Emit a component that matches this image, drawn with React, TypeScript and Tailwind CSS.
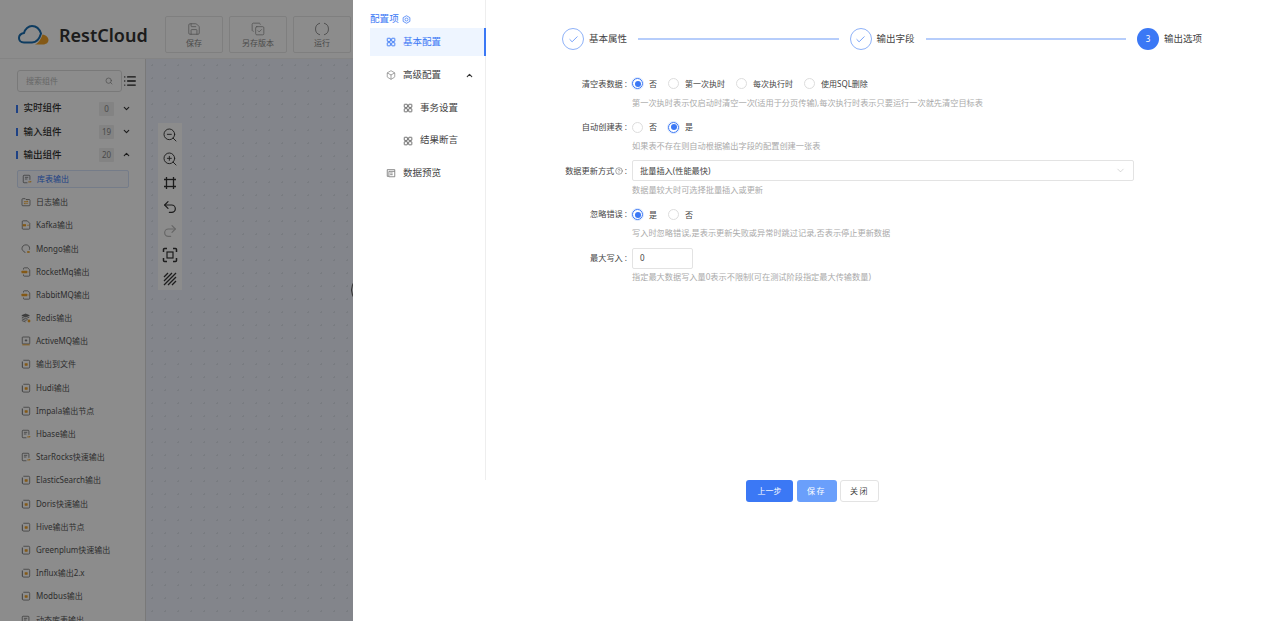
import React from 'react';
import { Save, CopyCheck, ZoomOut, ZoomIn, Undo2, Redo2, Search, ChevronDown, ChevronUp, Check, List, Box, CircleHelp } from 'lucide-react';

type IconKind = 'doc' | 'log' | 'kafka' | 'mongo' | 'mq' | 'redis' | 'active' | 'file';

const items: { label: string; icon: IconKind }[] = [
  { label: '日志输出', icon: 'log' },
  { label: 'Kafka输出', icon: 'kafka' },
  { label: 'Mongo输出', icon: 'mongo' },
  { label: 'RocketMq输出', icon: 'mq' },
  { label: 'RabbitMQ输出', icon: 'mq' },
  { label: 'Redis输出', icon: 'redis' },
  { label: 'ActiveMQ输出', icon: 'active' },
  { label: '输出到文件', icon: 'file' },
  { label: 'Hudi输出', icon: 'file' },
  { label: 'Impala输出节点', icon: 'file' },
  { label: 'Hbase输出', icon: 'doc' },
  { label: 'StarRocks快速输出', icon: 'doc' },
  { label: 'ElasticSearch输出', icon: 'file' },
  { label: 'Doris快速输出', icon: 'file' },
  { label: 'Hive输出节点', icon: 'file' },
  { label: 'Greenplum快速输出', icon: 'file' },
  { label: 'Influx输出2.x', icon: 'file' },
  { label: 'Modbus输出', icon: 'file' },
  { label: '动态库表输出', icon: 'doc' },
];

function NodeIcon({ kind }: { kind: IconKind }) {
  const stroke = '#555';
  const accent = '#f0a328';
  return (
    <svg viewBox="0 0 12 12" className="w-[10px] h-[10px] shrink-0" fill="none" stroke={stroke} strokeWidth="0.8">
      {kind === 'doc' && (
        <>
          <path d="M6.5 10.5H2.500a1 1 0 0 1-1-1v-7a1 1 0 0 1 1-1h6a1 1 0 0 1 1 1V7" />
          <path d="M3.500 4h4M3.500 6h3" />
          <path d="M7.500 9.500h3.500M9.800 8.300l1.200 1.200" stroke={accent} strokeWidth="1.100" />
        </>
      )}
      {kind === 'log' && (
        <>
          <path d="M1.200 3a1 1 0 0 1 1-1H5l1 1h3.800a1 1 0 0 1 1 1v5.500a1 1 0 0 1-1 1H2.200a1 1 0 0 1-1-1z" />
          <path d="M3.500 5.500h5M3.500 7.500h5M7 4.500l1.500 1M5 8.500L3.500 7.500" stroke={accent} strokeWidth="0.900" />
        </>
      )}
      {kind === 'kafka' && (
        <>
          <path d="M2.500 1h5l3 3v6a1 1 0 0 1-1 1h-7a1 1 0 0 1-1-1V2a1 1 0 0 1 1-1z" />
          <rect x="2" y="5" width="4" height="2.600" fill={accent} stroke="none" />
          <path d="M7 6.300h3" stroke={accent} />
        </>
      )}
      {kind === 'mongo' && (
        <>
          <path d="M6 1C3 1 1.200 3 1.200 5.400c0 2 1.300 3.200 2.800 3.700l1 1.600" />
          <path d="M6 1c2.600 0 4.300 1.800 4.300 4.200 0 .7-.1 1.300-.4 1.800" />
          <rect x="7.400" y="8.600" width="3" height="2" fill={accent} stroke="none" />
        </>
      )}
      {kind === 'mq' && (
        <>
          <path d="M3 3V2a1 1 0 0 1 1-1h4l2.500 2.500V10a1 1 0 0 1-1 1H4a1 1 0 0 1-1-1V9" />
          <rect x="0.600" y="4.400" width="7" height="3.200" rx="0.600" fill={accent} stroke="none" />
          <path d="M8.800 6h1.700" stroke={accent} />
        </>
      )}
      {kind === 'redis' && (
        <>
          <path d="M5.500 1.200L10 3 5.500 4.800 1 3z" fill="#777" />
          <path d="M1 5l4.500 1.800L10 5M1 7l4.500 1.800L8 7.800M1 9l4.500 1.800" />
          <circle cx="9.600" cy="9.600" r="1.700" fill={accent} stroke="none" />
        </>
      )}
      {kind === 'active' && (
        <>
          <rect x="1.500" y="1.200" width="9" height="8.300" rx="0.800" />
          <path d="M4.500 5.300h3M6 3.800v3" />
          <path d="M1.500 10.600h9" stroke={accent} strokeWidth="1.100" />
        </>
      )}
      {kind === 'file' && (
        <>
          <path d="M2.800 1.500H9a1.400 1.400 0 0 1 1.400 1.400v6.600A1.400 1.400 0 0 1 9 10.900H3.200a1.400 1.400 0 0 1-1.400-1.400" />
          <path d="M1.600 3v7" strokeWidth="1" />
          <rect x="4.400" y="5" width="3.600" height="3" rx="0.500" fill={accent} stroke="none" />
        </>
      )}
    </svg>
  );
}

function ToolButton({ label, children }: { label: string; children: React.ReactNode }) {
  return (
    <div className="w-[58px] h-[37px] border border-[#e8e8e8] rounded-[2px] flex flex-col items-center pt-[5px] text-[8px] leading-[11px] text-[#888] shrink-0">
      {children}
      <span className="mt-[1px]">{label}</span>
    </div>
  );
}

function Section({ title, count, open }: { title: string; count: number; open?: boolean }) {
  return (
    <div className="h-[23.2px] flex items-center pl-[16px] pr-[14.5px]">
      <span className="w-[1.5px] h-[8px] bg-[#3a78f2] mr-[6px]" />
      <span className="text-[9.5px] font-medium text-[#333] flex-1">{title}</span>
      <span className="w-[15px] h-[14px] bg-[#eee] rounded-[1px] text-[8px] text-[#888] flex items-center justify-center mr-[7.5px]">{count}</span>
      {open ? <ChevronUp className="w-[9px] h-[9px] text-[#333]" strokeWidth={3} /> : <ChevronDown className="w-[9px] h-[9px] text-[#333]" strokeWidth={3} />}
    </div>
  );
}

function Radio({ label, checked }: { label: string; checked?: boolean }) {
  return (
    <label className="flex items-center mr-[11px]">
      <span className={`w-[11px] h-[11px] rounded-full border flex items-center justify-center mr-[6px] ${checked ? 'border-[#3b78f5] shadow-[0_0_0_1px_#dbe7fd]' : 'border-[#ddd]'}`}>
        {checked && <span className="w-[6px] h-[6px] rounded-full bg-[#3b78f5]" />}
      </span>
      <span className="text-[8px] text-[#444]">{label}</span>
    </label>
  );
}

function FormItem({ label, help, children }: { label: React.ReactNode; help: string; children: React.ReactNode }) {
  return (
    <div className="h-[43.6px] flex">
      <div className="w-[92px] h-[21px] flex items-center justify-end pr-[5px] text-[8.2px] text-[#444] shrink-0">
        {label}
        <span className="ml-[2px]">:</span>
      </div>
      <div className="flex-1">
        <div className="h-[21px] flex items-center">{children}</div>
        <div className="mt-[1.5px] h-[14px] flex items-center text-[8.2px] text-[#aaa]">{help}</div>
      </div>
    </div>
  );
}

function Step({ label, done, num, last }: { label: string; done?: boolean; num?: number; last?: boolean }) {
  return (
    <div className={`flex items-center ${last ? '' : 'flex-1'}`}>
      {done ? (
        <span className="w-[22px] h-[22px] rounded-full border border-[#8fb2f8] flex items-center justify-center shrink-0">
          <Check className="w-[11px] h-[11px] text-[#3b78f5]" strokeWidth={1.5} />
        </span>
      ) : (
        <span className="w-[22px] h-[22px] rounded-full bg-[#3b78f5] text-white text-[8px] flex items-center justify-center shrink-0">{num}</span>
      )}
      <span className="ml-[5px] pt-[1px] text-[9.5px] text-[#444] shrink-0">{label}</span>
      {!last && <span className="flex-1 h-[2px] bg-[#b6cdfb] mx-[11px]" />}
    </div>
  );
}

function GridIcon({ className }: { className: string }) {
  return (
    <svg viewBox="0 0 12 12" className={className} fill="none" stroke="currentColor" strokeWidth="1.1">
      <rect x="1.500" y="1.500" width="3.800" height="3.800" rx="0.500" />
      <rect x="6.800" y="1.500" width="3.800" height="3.800" rx="0.500" />
      <rect x="1.500" y="6.800" width="3.800" height="3.800" rx="0.500" />
      <rect x="6.800" y="6.800" width="3.800" height="3.800" rx="0.500" />
    </svg>
  );
}

export default function App() {
  return (
    <div className="relative w-full h-screen overflow-hidden bg-white font-['Noto_Sans','Noto_Sans_CJK_SC',sans-serif]">
      {/* app behind the drawer */}
      <div className="h-full flex flex-col">
        <div className="h-[59px] shrink-0 flex items-start pt-[16px] pl-[18px] gap-[6px] shadow-[inset_0_-1px_0_#f0f0f0]">
          <div className="flex items-center w-[141px] h-[37px] shrink-0">
            <svg viewBox="0 0 31 20" className="w-[31px] h-[20px] shrink-0">
              <path d="M17 19.500C21 18 23.500 13 24.500 9.500C28 10 30.500 12.500 30.500 15C30.500 18 27.500 19.500 25 19.500Z" fill="#f0a328" />
              <path d="M6 17.500C2.500 17.500 1 15 1 13C1 10 3.500 8.500 6 8C7 4 10.500 1 14 1C18 1 21.500 4 23 8.500C22 12 20 17.500 14 17.500Z" fill="none" stroke="#1a6db0" strokeWidth="2" />
            </svg>
            <span className="ml-[10px] text-[18px] leading-none font-semibold text-[#333]">RestCloud</span>
          </div>
          <ToolButton label="保存"><Save className="w-[14px] h-[14px]" strokeWidth={1.2} /></ToolButton>
          <ToolButton label="另存版本"><CopyCheck className="w-[14px] h-[14px]" strokeWidth={1.2} /></ToolButton>
          <ToolButton label="运行">
            <svg viewBox="0 0 14 14" className="w-[14px] h-[14px]" fill="none" stroke="#888" strokeWidth="0.900"><path d="M5 1.200a6 6 0 0 0 0 11.600M9 1.200a6 6 0 0 1 0 11.600" /></svg>
          </ToolButton>
        </div>
        <div className="flex-1 flex min-h-0">
          <aside className="w-[146px] shrink-0 border-r border-[#ddd] overflow-hidden pt-[11px]">
            <div className="flex items-center pl-[17px] mb-[5px]">
              <div className="w-[105px] h-[22px] border border-[#ddd] rounded-[3px] flex items-center px-[8px] text-[8px] text-[#bbb]">
                <span className="flex-1">搜索组件</span>
                <Search className="w-[8px] h-[8px] text-[#888]" />
              </div>
              <List className="w-[14px] h-[14px] ml-[1px] text-[#222]" strokeWidth={2.4} />
            </div>
            <Section title="实时组件" count={0} />
            <Section title="输入组件" count={19} />
            <Section title="输出组件" count={20} open />
            <div className="mx-[17px] mt-[3.5px] w-[112px] h-[18px] border border-[#d5e2fa] bg-[#f7f9ff] rounded-[2px] flex items-center pl-[4px] text-[8px] text-[#3a78f2]">
              <NodeIcon kind="doc" />
              <span className="ml-[5px]">库表输出</span>
            </div>
            <div className="mt-[2.5px]">
              {items.map((item) => (
                <div key={item.label} className="h-[23.2px] flex items-center pl-[21px] text-[8px] text-[#555]">
                  <NodeIcon kind={item.icon} />
                  <span className="ml-[5px] whitespace-nowrap">{item.label}</span>
                </div>
              ))}
            </div>
          </aside>
          <main className="relative flex-1 bg-[#eff3fe] bg-[radial-gradient(#dde2ec_1px,transparent_1px)] bg-[size:13px_13px] pt-[64px] pl-[12px]">
            <div className="w-[24px] h-[167px] bg-white flex flex-col items-center pt-[4px] gap-[8px] text-[#333]">
              <ZoomOut className="w-[16px] h-[16px]" strokeWidth={1.4} />
              <ZoomIn className="w-[16px] h-[16px]" strokeWidth={1.4} />
              <svg viewBox="0 0 16 16" className="w-[16px] h-[16px]" fill="none" stroke="currentColor" strokeWidth="1.300">
                <rect x="4.500" y="4.500" width="7" height="7" />
                <path d="M4.500 2v2.500M11.500 2v2.500M4.500 11.500V14M11.500 11.500V14M2 4.500h2.500M11.500 4.500H14M2 11.500h2.500M11.500 11.500H14" />
              </svg>
              <Undo2 className="w-[16px] h-[16px]" strokeWidth={1.8} />
              <Redo2 className="w-[16px] h-[16px] text-[#bbb]" strokeWidth={1.8} />
              <svg viewBox="0 0 16 16" className="w-[16px] h-[16px]" fill="none" stroke="currentColor" strokeWidth="1.500">
                <path d="M1.500 5V2.500a1 1 0 0 1 1-1H5M11 1.500h2.500a1 1 0 0 1 1 1V5M14.500 11v2.500a1 1 0 0 1-1 1H11M5 14.500H2.500a1 1 0 0 1-1-1V11" />
                <rect x="5" y="5" width="6" height="6" strokeWidth="1.200" />
              </svg>
              <svg viewBox="0 0 16 16" className="w-[16px] h-[16px]" fill="none" stroke="currentColor" strokeWidth="1.300">
                <path d="M2 6l4-4M2 10l8-8M2 14L14 2M6 14l8-8M10 14l4-4" />
              </svg>
            </div>
            {/* node peeking out from under the drawer */}
            <span className="absolute left-[205px] top-[216px] w-[30px] h-[30px] rounded-full border border-[#555]" />
          </main>
        </div>
      </div>

      <div className="fixed inset-0 bg-black/45" />

      {/* drawer */}
      <div className="fixed top-0 bottom-0 right-0 left-[353px] bg-white flex flex-col">
        <div className="flex h-[480px] shrink-0 pl-[17px]">
          <div className="w-[116px] shrink-0 border-r border-[#eee] h-full flex flex-col">
            <div className="h-[28px] pt-[10px] flex items-center text-[9.6px] text-[#3b78f5]">
              配置项
              <svg viewBox="0 0 12 12" className="w-[9px] h-[9px] ml-[3px]" fill="none" stroke="#3b78f5" strokeWidth="1">
                <path d="M6 1l4.500 2.500v5L6 11 1.500 8.500v-5z" />
                <circle cx="6" cy="6" r="2" />
              </svg>
            </div>
            <div className="h-[27.5px] bg-[#eef5ff] border-r-2 border-[#3b78f5] flex items-center pl-[16px] text-[9.5px] text-[#3b78f5] mr-[-1px]">
              <GridIcon className="w-[10px] h-[10px] mr-[7px]" />
              基本配置
            </div>
            <div className="h-[27px] mt-[6px] flex items-center pl-[16px] text-[9.5px] text-[#444] pr-[11px]">
              <Box className="w-[10px] h-[10px] mr-[7px] text-[#666]" strokeWidth={1.4} />
              <span className="flex-1">高级配置</span>
              <ChevronUp className="w-[9px] h-[9px] text-[#333]" strokeWidth={3} />
            </div>
            <div className="h-[27px] mt-[6px] flex items-center pl-[33px] text-[9.5px] text-[#444]">
              <GridIcon className="w-[10px] h-[10px] mr-[7px] text-[#666]" />
              事务设置
            </div>
            <div className="h-[27px] mt-[5.5px] flex items-center pl-[33px] text-[9.5px] text-[#444]">
              <GridIcon className="w-[10px] h-[10px] mr-[7px] text-[#666]" />
              结果断言
            </div>
            <div className="h-[27px] mt-[5.5px] flex items-center pl-[16px] text-[9.5px] text-[#444]">
              <svg viewBox="0 0 12 12" className="w-[10px] h-[10px] mr-[7px]" fill="none" stroke="#666" strokeWidth="0.900">
                <path d="M1.500 2h9v2H3.500v6H1.500zM5 6h3M5 8h3M10.500 4v6.500H3.500" />
              </svg>
              数据预览
            </div>
          </div>

          <div className="flex-1 min-w-0">
            <div className="h-[73.3px] pt-[28px] pl-[76px] pr-[65px]">
              <div className="flex h-[22px] items-center">
                <Step label="基本属性" done />
                <Step label="输出字段" done />
                <Step label="输出选项" num={3} last />
              </div>
            </div>
            <div className="pl-[54px] pr-[133px]">
              <FormItem label="清空表数据" help="第一次执时表示仅启动时清空一次(适用于分页传输),每次执行时表示只要运行一次就先清空目标表">
                <Radio label="否" checked />
                <Radio label="第一次执时" />
                <Radio label="每次执行时" />
                <Radio label="使用SQL删除" />
              </FormItem>
              <FormItem label="自动创建表" help="如果表不存在则自动根据输出字段的配置创建一张表">
                <Radio label="否" />
                <Radio label="是" checked />
              </FormItem>
              <FormItem
                label={
                  <>
                    数据更新方式
                    <CircleHelp className="w-[8px] h-[8px] ml-[0.5px] text-[#555]" strokeWidth={1.5} />
                  </>
                }
                help="数据量较大时可选择批量插入或更新"
              >
                <div className="w-full h-[21px] border border-[#e3e3e3] rounded-[2px] flex items-center pl-[7px] pr-[7px] text-[8.2px] text-[#444]">
                  <span className="flex-1">批量插入(性能最快)</span>
                  <ChevronDown className="w-[11px] h-[11px] text-[#aaa]" strokeWidth={1} />
                </div>
              </FormItem>
              <FormItem label="忽略错误" help="写入时忽略错误,是表示更新失败或异常时跳过记录,否表示停止更新数据">
                <Radio label="是" checked />
                <Radio label="否" />
              </FormItem>
              <FormItem label="最大写入" help="指定最大数据写入量0表示不限制(可在测试阶段指定最大传输数量)">
                <div className="w-[61px] h-[21px] border border-[#e3e3e3] rounded-[2px] flex items-center pl-[7px] text-[8px] text-[#444]">0</div>
              </FormItem>
            </div>
          </div>
        </div>

        <div className="flex justify-start pl-[393px] gap-[3.5px]">
          <button className="w-[47px] h-[22px] rounded-[3px] bg-[#3b78f5] text-white text-[8px]">上一步</button>
          <button className="w-[40px] h-[22px] rounded-[3px] bg-[#6a9ffb] text-white text-[8px] tracking-[1.5px]">保存</button>
          <button className="w-[39px] h-[22px] rounded-[3px] border border-[#e3e3e3] bg-white text-[#444] text-[8px] tracking-[1.5px]">关闭</button>
        </div>
      </div>
    </div>
  );
}
